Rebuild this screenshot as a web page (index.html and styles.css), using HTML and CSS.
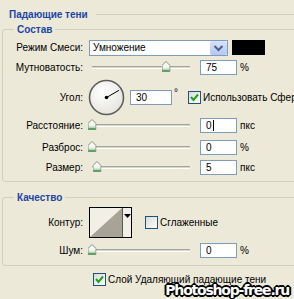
FILE: index.html
```html
<!DOCTYPE html>
<html lang="ru">
<head>
  <meta charset="UTF-8">
  <title>Падающие тени</title>
  <link rel="stylesheet" href="styles.css">
</head>
<body>
  <div class="dialog">
    <div class="section-title"><span>Падающие тени</span></div>

    <!-- Structure -->
    <fieldset class="group group-structure">
      <legend>Состав</legend>

      <div class="row row-blend">
        <span class="label">Режим Смеси:</span>
        <div class="select">
          <span class="select-value">Умножение</span>
          <span class="select-btn">
            <svg width="17" height="14" viewBox="0 0 17 14"><polyline points="4.5,5 8.5,9 12.5,5" fill="none" stroke="#4d6185" stroke-width="2"/></svg>
          </span>
        </div>
        <span class="swatch"></span>
      </div>

      <div class="row row-opacity">
        <span class="label">Мутноватость:</span>
        <div class="slider"><div class="track"><span class="thumb" style="left: 75%"></span></div></div>
        <span class="num">75</span><span class="unit">%</span>
      </div>

      <div class="row row-angle">
        <span class="label">Угол:</span>
        <svg class="dial" width="37" height="37" viewBox="0 0 37 37">
          <defs>
            <radialGradient id="dialFill" cx="40%" cy="35%" r="70%">
              <stop offset="0" stop-color="#ffffff"/>
              <stop offset="1" stop-color="#e4e3dc"/>
            </radialGradient>
          </defs>
          <circle cx="18.5" cy="18.5" r="17" fill="url(#dialFill)" stroke="#5e5e5e" stroke-width="1.6"/>
          <line x1="18.5" y1="18.5" x2="31" y2="11.3" stroke="#000" stroke-width="1"/>
          <circle cx="18.5" cy="18.5" r="1.8" fill="#000"/>
        </svg>
        <span class="num num-angle">30</span><span class="deg">°</span>
        <span class="check checked"></span><span class="check-text">Использовать Сферическое освещение</span>
      </div>

      <div class="row row-distance">
        <span class="label">Расстояние:</span>
        <div class="slider"><div class="track"><span class="thumb" style="left: 0%"></span></div></div>
        <span class="num">0<i class="caret"></i></span><span class="unit">пкс</span>
      </div>

      <div class="row row-spread">
        <span class="label">Разброс:</span>
        <div class="slider"><div class="track"><span class="thumb" style="left: 0%"></span></div></div>
        <span class="num">0</span><span class="unit">%</span>
      </div>

      <div class="row row-size">
        <span class="label">Размер:</span>
        <div class="slider"><div class="track"><span class="thumb" style="left: 5%"></span></div></div>
        <span class="num">5</span><span class="unit">пкс</span>
      </div>
    </fieldset>

    <!-- Quality -->
    <fieldset class="group group-quality">
      <legend>Качество</legend>

      <div class="row row-contour">
        <span class="label">Контур:</span>
        <div class="contour">
          <svg class="contour-preview" width="32" height="29" viewBox="0 0 32 29">
            <rect width="32" height="29" fill="#f1efe6"/>
            <polygon points="0,29 32,0 32,29" fill="#a7a397"/>
          </svg>
          <span class="contour-btn">
            <svg width="7" height="4" viewBox="0 0 7 4"><polygon points="0,0 7,0 3.5,4" fill="#000"/></svg>
          </span>
        </div>
        <span class="check"></span><span class="check-text">Сглаженные</span>
      </div>

      <div class="row row-noise">
        <span class="label">Шум:</span>
        <div class="slider"><div class="track"><span class="thumb" style="left: 0%"></span></div></div>
        <span class="num">0</span><span class="unit">%</span>
      </div>
    </fieldset>

    <div class="row row-knockout">
      <span class="check checked"></span><span class="check-text">Слой Удаляющий падающие тени</span>
    </div>
  </div>

  <div class="watermark">Photoshop-free.ru</div>
</body>
</html>
```

FILE: styles.css
```css
/* Layer style: drop shadow panel */
body {
  margin: 0;
  width: 294px;
  height: 299px;
  position: relative;
  overflow: hidden;
  background: #ece9d8;
  font-family: 'Liberation Sans', Arial, sans-serif;
  font-size: 10px;
  color: #000;
}

.dialog {
  width: 330px;
  padding-left: 2px;
}

/* Section header with rule */
.section-title {
  display: flex;
  align-items: center;
  gap: 8px;
  height: 13px;
  line-height: 13px;
  padding: 8px 0 0 7px;
  font-weight: bold;
  color: #1d45a4;
}

.section-title::after {
  content: "";
  flex: 1;
  border-top: 1px solid #d0d0bf;
}

/* Group boxes */
.group {
  margin: 2px 0 0;
  padding: 4px 0 6px;
  min-width: 0;
  border: 1px solid #d0d0bf;
  border-radius: 3px;
}

.group legend {
  margin-left: 11px;
  padding: 0 3px;
  line-height: 13px;
  font-weight: bold;
  color: #1d45a4;
}

.group-quality {
  margin-top: 9px;
  padding-top: 3px;
  padding-bottom: 7px;
}

/* Rows */
.row {
  display: flex;
  align-items: center;
  height: 15px;
  white-space: nowrap;
}

.row > * {
  flex: none;
}

.row-opacity { margin-top: 5px; }
.row-angle { margin-top: 4px; height: 36px; }
.row-distance { margin-top: 3px; }
.row-spread { margin-top: 7px; }
.row-size { margin-top: 5px; }
.row-contour { height: 31px; }
.row-noise { margin-top: 5px; }

.row-knockout {
  margin-top: 7px;
  height: 13px;
  padding-left: 91px;
}

.label {
  width: 80px;
  margin-right: 6px;
  text-align: right;
}

/* Blend mode select */
.select {
  display: flex;
  align-items: center;
  box-sizing: border-box;
  width: 139px;
  height: 16px;
  padding: 1px;
  border: 1px solid #7f9db9;
  background: #fff;
}

.select-value {
  flex: 1;
  padding-left: 2px;
}

.select-btn {
  display: flex;
  align-items: center;
  justify-content: center;
  width: 17px;
  height: 14px;
  margin-right: -1px;
  border-radius: 2px;
  background: linear-gradient(#d7e2fb, #b4c7f5);
}

.swatch {
  width: 33px;
  height: 15px;
  margin-left: 4px;
  background: #000;
}

/* Sliders */
.slider {
  width: 111px;
  height: 15px;
  display: flex;
  align-items: center;
}

.track {
  position: relative;
  width: 98px;
  height: 1px;
  margin-left: 3px;
  border-top: 1px solid #a6a59c;
  border-bottom: 1px solid #fff;
  background: #d8d6c8;
}

.thumb {
  position: absolute;
  top: -6px;
  width: 9px;
  height: 11px;
  transform: translateX(-50%);
  background: url("data:image/svg+xml;utf8,<svg xmlns='http://www.w3.org/2000/svg' width='9' height='11'><defs><linearGradient id='g' x1='0' y1='0' x2='0' y2='1'><stop offset='0' stop-color='%23ffffff'/><stop offset='0.6' stop-color='%23f2f2ee'/><stop offset='1' stop-color='%2377c77e'/></linearGradient></defs><path d='M0.5 4.5 L4.5 0.5 L8.5 4.5 L8.5 10.5 L0.5 10.5 Z' fill='url(%23g)' stroke='%23809080'/><line x1='1' y1='9.5' x2='8' y2='9.5' stroke='%2340b04e'/></svg>") no-repeat;
}

/* Number fields */
.num {
  box-sizing: border-box;
  width: 37px;
  height: 15px;
  padding-left: 5px;
  line-height: 13px;
  border: 1px solid #7f9db9;
  background: #fff;
}

.num-angle {
  width: 42px;
  margin-left: 5px;
}

.caret {
  display: inline-block;
  width: 1px;
  height: 11px;
  margin-left: 1px;
  vertical-align: -2px;
  background: #000;
}

.unit {
  margin-left: 3px;
}

.dial {
  margin-left: -1px;
}

.deg {
  align-self: flex-start;
  margin: 8px 0 0 2px;
  line-height: 11px;
}

/* Checkboxes */
.check {
  box-sizing: border-box;
  width: 13px;
  height: 13px;
  border: 1px solid #1c5180;
  background: linear-gradient(135deg, #dcdcd7, #fbfbf9);
}

.check.checked {
  background: url("data:image/svg+xml;utf8,<svg xmlns='http://www.w3.org/2000/svg' width='11' height='11'><polyline points='2,5 4.5,8 9,2.5' fill='none' stroke='%2321a121' stroke-width='2'/></svg>") no-repeat, linear-gradient(135deg, #dcdcd7, #fbfbf9);
}

.row-angle .check {
  margin-left: 10px;
}

.check-text {
  margin-left: 2px;
}

/* Contour picker */
.contour {
  display: flex;
  box-sizing: border-box;
  width: 43px;
  height: 31px;
  border: 1px solid #000;
  background: #f1efe6;
}

.contour-preview {
  display: block;
  width: 32px;
  height: 29px;
  border-right: 1px solid #5a5a55;
}

.contour-btn {
  flex: 1;
  display: flex;
  justify-content: center;
  padding-top: 6px;
}

.row-contour .check {
  margin-left: 13px;
}

/* Watermark */
.watermark {
  position: absolute;
  right: 5px;
  bottom: 0;
  line-height: 17px;
  font-family: 'DejaVu Sans', sans-serif;
  font-size: 14px;
  font-weight: bold;
  letter-spacing: -1.2px;
  color: #fff;
  text-shadow: 1px 0 #000, -1px 0 #000, 0 1px #000, 0 -1px #000,
    1px 1px #000, -1px -1px #000, 1px -1px #000, -1px 1px #000,
    2px 0 #000, -2px 0 #000, 0 2px #000, 0 -2px #000;
}
```
